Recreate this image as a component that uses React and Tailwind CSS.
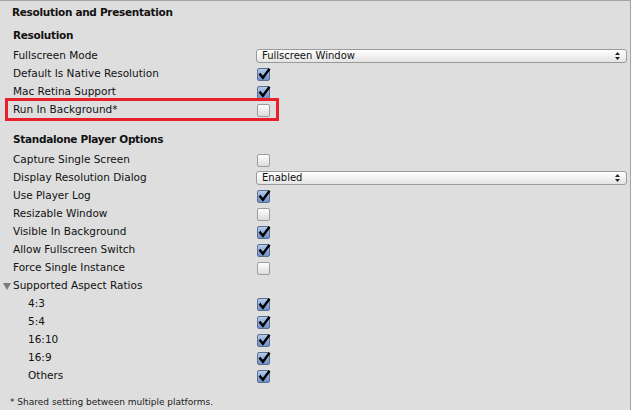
import React from 'react';

function Checkbox({ checked }) {
    if (checked) {
        return (
            <div className="relative h-[13px] w-[13px] rounded-[2px] border border-[#5b6f93] bg-gradient-to-b from-[#b4caea] to-[#6f90c6]">
                <svg viewBox="0 0 13 13" className="absolute -left-px -top-[2px] h-[14px] w-[14px]">
                    <path d="M3 7 L5.5 10 L11 2.5" fill="none" stroke="#000" strokeWidth="2.2" strokeLinecap="square" strokeLinejoin="miter" />
                </svg>
            </div>
        );
    }
    return (
        <div className="h-[13px] w-[13px] rounded-[2px] border border-[#9d9d9d] bg-gradient-to-b from-[#ffffff] to-[#dcdcdc]" />
    );
}

function Dropdown({ value }) {
    return (
        <div className="flex h-[14px] w-[371px] items-center justify-between rounded-[3px] border border-[#9a9a9a] bg-gradient-to-b from-[#ffffff] to-[#e4e4e4] pl-[5px] pr-[6px]">
            <span className="text-[10px] leading-none text-[#111]">{value}</span>
            <svg viewBox="0 0 5 8" className="h-[8px] w-[5px]">
                <path d="M2.5 0 L5 3 L0 3 Z M0 5 L5 5 L2.5 8 Z" fill="#222" />
            </svg>
        </div>
    );
}

function Row({ label, children, indent = false }) {
    return (
        <div className="flex h-[18px] items-center">
            <div className={indent ? 'w-[257px] pl-[28px]' : 'w-[257px] pl-[13px]'}>{label}</div>
            <div className="flex items-center">{children}</div>
        </div>
    );
}

export default function App() {
    const standalone = [
        ['Capture Single Screen', false],
        ['Display Resolution Dialog', 'Enabled'],
        ['Use Player Log', true],
        ['Resizable Window', false],
        ['Visible In Background', true],
        ['Allow Fullscreen Switch', true],
        ['Force Single Instance', false],
    ];
    const ratios = ['4:3', '5:4', '16:10', '16:9', 'Others'];

    return (
        <div
            className="h-[410px] w-[631px] overflow-hidden border-r border-t border-[#a3a3a3] bg-[#dedede] text-[10.5px] text-[#111]"
            style={{ fontFamily: '"DejaVu Sans", sans-serif' }}
        >
            <div className="flex h-[20px] items-center pl-[12px] pt-[4px] font-bold tracking-[-0.3px]">Resolution and Presentation</div>
            <div className="mt-[6px] flex h-[18px] items-center pl-[13px] font-bold tracking-[-0.3px]">Resolution</div>
            <div className="mt-[2px]">
                <Row label="Fullscreen Mode">
                    <div className="-ml-px"><Dropdown value="Fullscreen Window" /></div>
                </Row>
                <Row label="Default Is Native Resolution"><Checkbox checked /></Row>
                <Row label="Mac Retina Support"><Checkbox checked /></Row>
                <div className="relative">
                    <Row label="Run In Background*"><Checkbox checked={false} /></Row>
                    <div className="absolute left-[5px] top-[-3px] h-[23px] w-[274px] border-[3px] border-[#e8202a]" />
                </div>
            </div>

            <div className="mt-[12px] flex h-[18px] items-center pl-[13px] font-bold tracking-[-0.3px]">Standalone Player Options</div>
            <div className="mt-[2px]">
                {standalone.map(([label, v]) => (
                    <Row key={label} label={label}>
                        {typeof v === 'string' ? (
                            <div className="-ml-px"><Dropdown value={v} /></div>
                        ) : (
                            <Checkbox checked={v} />
                        )}
                    </Row>
                ))}
                <div className="flex h-[18px] items-center">
                    <svg viewBox="0 0 8 7" className="ml-[3px] mr-[2px] h-[7px] w-[8px]">
                        <path d="M0 0 L8 0 L4 7 Z" fill="#7a7a7a" />
                    </svg>
                    <span>Supported Aspect Ratios</span>
                </div>
                {ratios.map((r) => (
                    <Row key={r} label={r} indent><Checkbox checked /></Row>
                ))}
            </div>

            <div className="mt-[11px] pl-[10px] text-[9px] text-[#222]">* Shared setting between multiple platforms.</div>
        </div>
    );
}
